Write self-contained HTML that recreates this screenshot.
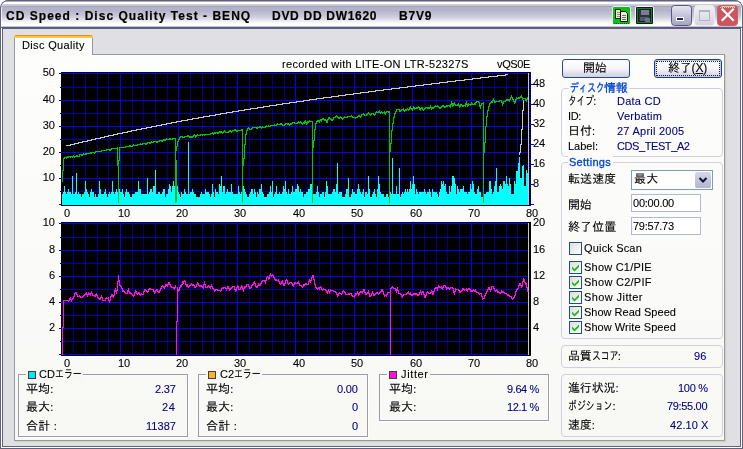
<!DOCTYPE html>
<html lang="ja"><head><meta charset="utf-8"><title>CD Speed : Disc Quality Test</title>
<style>
html,body{margin:0;padding:0;background:#fff;}
body{width:743px;height:449px;overflow:hidden;position:relative;font-family:"Liberation Sans","IPAGothic",sans-serif;font-size:12px;color:#000;}
#win{position:absolute;left:0;top:0;width:743px;height:449px;box-sizing:border-box;background:#e0dfe3;border-radius:8px 8px 0 0;overflow:hidden;}
.fr{position:absolute;box-sizing:border-box;border-style:solid;border-width:0 1px 1px 1px;pointer-events:none;}
#title{position:absolute;left:0;top:0;width:743px;height:29px;border-radius:8px 8px 0 0;
background:linear-gradient(180deg,#5e5e78 0,#5e5e78 1px,#a8a8c0 1px,#a8a8c0 2px,#ffffff 2px,#ffffff 4px,#cfcfe0 4px,#c4c4d8 6px,#a4a4b6 6px,#a4a4b6 7px,#b3b3c7 7px,#b4b4c8 11px,#bcbcce 12px,#c4c4d6 15px,#d4d4e2 18px,#ececf0 21px,#fdfdfb 23px,#fefefe 26px,#c0c0d6 26px,#c0c0d6 27px,#5e5e7c 27px,#5e5e7c 29px);}
#title:after{content:"";position:absolute;left:0;top:0;width:743px;height:29px;box-sizing:border-box;border:1px solid #62627e;border-bottom:none;border-radius:8px 8px 0 0;}
#title:before{content:"";position:absolute;left:1px;top:1px;width:741px;height:26px;box-sizing:border-box;border:1px solid rgba(255,255,255,0.75);border-bottom:none;border-top:none;border-radius:7px 7px 0 0;}
.tt{font-weight:bold;font-size:12px;}
.tt .l{font-size:12px;}
.abs{will-change:transform;position:absolute;white-space:nowrap;height:14px;line-height:14px;-webkit-text-stroke:0.1px currentColor;}
.tt{-webkit-text-stroke:0.2px #000;}
.l{font-size:11px;}
.k{display:inline-block;transform:scaleX(0.74);transform-origin:0 50%;}
.gbt{color:#0046d5;-webkit-text-stroke:0.3px #0046d5;}
.nv{color:#000080;}
.r{text-align:right;}
#page{position:absolute;left:14px;top:54px;width:711px;height:387px;box-sizing:border-box;border:1px solid #919b9c;background:linear-gradient(180deg,#fdfdfc,#f8f8f5);box-shadow:1px 1px 0 #d4d2c4, 2px 2px 0 #dcdbd4;}
#tab{position:absolute;left:14px;top:35px;width:79px;height:20px;box-sizing:border-box;border:1px solid #919b9c;border-bottom:none;border-top:none;background:#fcfcfb;border-radius:3px 3px 0 0;}
#tab:before{content:"";position:absolute;left:-1px;top:0;width:79px;height:3px;background:linear-gradient(180deg,#e68b2c 0 1px,#ffc73c 1px 3px);border-radius:3px 3px 0 0;}
.gb{position:absolute;box-sizing:border-box;border:1px solid #d0d0de;border-radius:4px;}
.gbl{position:absolute;height:12px;background:#f9f9f6;}
.gs{position:absolute;box-sizing:border-box;border:1px solid #9c9caa;box-shadow:1px 1px 0 #fff;}
.gsl{position:absolute;height:14px;background:#f7f7f4;}
.sq{position:absolute;width:8px;height:8px;box-sizing:border-box;border:1px solid #404040;}
.btn{position:absolute;box-sizing:border-box;height:19px;border:1px solid #26489c;border-radius:3px;background:linear-gradient(180deg,#ffffff 0,#f6f6fa 50%,#cfcfe0 100%);text-align:center;line-height:18px;}
.edit{position:absolute;box-sizing:border-box;border:1px solid #b4b8cc;background:#fff;}
.cb{position:absolute;width:13px;height:13px;box-sizing:border-box;border:1px solid #1c5180;background:linear-gradient(135deg,#dcdcd7,#ffffff);}
.cb svg{position:absolute;left:0;top:0;}
</style></head><body>
<div id="win">
<div id="title"></div>
<div style="position:absolute;left:671px;top:5px;width:21px;height:21px;box-sizing:border-box;border:1px solid #5a5a80;border-radius:3.5px;background:linear-gradient(180deg,#e4e4f0,#c4c4d8 50%,#a4a4c0)"></div><div style="position:absolute;left:694px;top:5px;width:21px;height:21px;box-sizing:border-box;border:1px solid #ececf2;border-radius:3.5px;background:linear-gradient(180deg,#f0f0f4,#d4d4e0)"></div>
<svg width="140" height="29" viewBox="603 0 140 29" style="position:absolute;left:603px;top:0">
<!-- copy icon -->
<rect x="612" y="6" width="19" height="19" rx="2.5" fill="#f4f4f8"/>
<rect x="613" y="7" width="17" height="17" rx="1" fill="#08c408"/>
<rect x="615.5" y="9.5" width="5" height="9" fill="#ece8d0" stroke="#202020" stroke-width="1"/>
<path d="M616.5 12H620M616.5 14H620M616.5 16H620" stroke="#8c8c8c" stroke-width="1" shape-rendering="crispEdges"/>
<path d="M620.5 11.5H625.5L627.5 13.5V21.5H620.5Z" fill="#f0ecd8" stroke="#101010" stroke-width="1"/>
<path d="M622 15H626M622 17H626M622 19H626" stroke="#707070" stroke-width="1" shape-rendering="crispEdges"/>
<path d="M614 23.5H629" stroke="#083c78" stroke-width="1" stroke-dasharray="1 1" shape-rendering="crispEdges"/>
<!-- save icon -->
<rect x="635" y="6" width="19" height="19" rx="2.5" fill="#f4f4f8"/>
<rect x="636" y="7" width="17" height="17" rx="1" fill="#101820"/>
<rect x="637.5" y="8.5" width="14" height="14" fill="#284848" stroke="#18d018" stroke-width="1" stroke-dasharray="1 1"/>
<rect x="638.5" y="9.5" width="12" height="12" fill="#2c3440" stroke="#181c28" stroke-width="1"/>
<rect x="641" y="10" width="8" height="5" fill="#7c7c94"/>
<rect x="640" y="17" width="8" height="4" fill="#50586c"/>
<rect x="645" y="18" width="5" height="4" fill="#6c7488"/>
<!-- minimize -->

<rect x="676" y="17" width="8" height="4" fill="#fff"/>
<rect x="677" y="18" width="6" height="2" fill="#1c2464"/>
<!-- maximize (disabled) -->

<rect x="699.5" y="11.5" width="10" height="9" fill="none" stroke="#b4b4c0" stroke-width="1"/>
<rect x="699" y="10" width="11" height="2" fill="#b4b4c0"/>
<!-- close -->
<rect x="717.5" y="5.5" width="20" height="20" rx="3" fill="#cc5660" stroke="#c8606c" stroke-width="1"/>
<path d="M722.5 9.5L733 20M733 9.5L722.5 20" stroke="#fff" stroke-width="2.1" stroke-linecap="square"/>
<path d="M720 7.5H736" stroke="#f4d47c" stroke-width="1" stroke-dasharray="1 1" shape-rendering="crispEdges"/>
<rect x="721" y="6" width="14" height="1" fill="#d0c8b0"/>
</svg>
<div id="page"></div>
<div id="tab"></div>
<svg id="charts" width="743" height="449" viewBox="0 0 743 449" style="position:absolute;left:0;top:0" shape-rendering="crispEdges">
<rect x="61" y="72" width="470" height="134" fill="#000"/>
<rect x="73" y="73" width="1" height="132" fill="#00008c"/>
<rect x="85" y="73" width="1" height="132" fill="#00008c"/>
<rect x="97" y="73" width="1" height="132" fill="#00008c"/>
<rect x="108" y="73" width="1" height="132" fill="#00008c"/>
<rect x="120" y="73" width="1" height="132" fill="#0000ff"/>
<rect x="132" y="73" width="1" height="132" fill="#00008c"/>
<rect x="143" y="73" width="1" height="132" fill="#00008c"/>
<rect x="155" y="73" width="1" height="132" fill="#00008c"/>
<rect x="167" y="73" width="1" height="132" fill="#00008c"/>
<rect x="178" y="73" width="1" height="132" fill="#0000ff"/>
<rect x="190" y="73" width="1" height="132" fill="#00008c"/>
<rect x="202" y="73" width="1" height="132" fill="#00008c"/>
<rect x="213" y="73" width="1" height="132" fill="#00008c"/>
<rect x="225" y="73" width="1" height="132" fill="#00008c"/>
<rect x="237" y="73" width="1" height="132" fill="#0000ff"/>
<rect x="249" y="73" width="1" height="132" fill="#00008c"/>
<rect x="260" y="73" width="1" height="132" fill="#00008c"/>
<rect x="272" y="73" width="1" height="132" fill="#00008c"/>
<rect x="284" y="73" width="1" height="132" fill="#00008c"/>
<rect x="295" y="73" width="1" height="132" fill="#0000ff"/>
<rect x="307" y="73" width="1" height="132" fill="#00008c"/>
<rect x="319" y="73" width="1" height="132" fill="#00008c"/>
<rect x="330" y="73" width="1" height="132" fill="#00008c"/>
<rect x="342" y="73" width="1" height="132" fill="#00008c"/>
<rect x="354" y="73" width="1" height="132" fill="#0000ff"/>
<rect x="365" y="73" width="1" height="132" fill="#00008c"/>
<rect x="377" y="73" width="1" height="132" fill="#00008c"/>
<rect x="389" y="73" width="1" height="132" fill="#00008c"/>
<rect x="401" y="73" width="1" height="132" fill="#00008c"/>
<rect x="412" y="73" width="1" height="132" fill="#0000ff"/>
<rect x="424" y="73" width="1" height="132" fill="#00008c"/>
<rect x="436" y="73" width="1" height="132" fill="#00008c"/>
<rect x="447" y="73" width="1" height="132" fill="#00008c"/>
<rect x="459" y="73" width="1" height="132" fill="#00008c"/>
<rect x="471" y="73" width="1" height="132" fill="#0000ff"/>
<rect x="482" y="73" width="1" height="132" fill="#00008c"/>
<rect x="494" y="73" width="1" height="132" fill="#00008c"/>
<rect x="506" y="73" width="1" height="132" fill="#00008c"/>
<rect x="517" y="73" width="1" height="132" fill="#00008c"/>
<rect x="59" y="73" width="470" height="1" fill="#0000ff"/>
<rect x="60" y="87" width="469" height="1" fill="#0000b0"/>
<rect x="59" y="100" width="470" height="1" fill="#0000ff"/>
<rect x="60" y="113" width="469" height="1" fill="#0000b0"/>
<rect x="59" y="126" width="470" height="1" fill="#0000ff"/>
<rect x="60" y="139" width="469" height="1" fill="#0000b0"/>
<rect x="59" y="152" width="470" height="1" fill="#0000ff"/>
<rect x="60" y="165" width="469" height="1" fill="#0000b0"/>
<rect x="59" y="178" width="470" height="1" fill="#0000ff"/>
<rect x="60" y="191" width="469" height="1" fill="#0000b0"/>
<rect x="59" y="204" width="470" height="1" fill="#0000ff"/>
<path d="M62 194v11M63 192v13M64 186v19M65 192v13M66 194v11M67 192v13M68 189v16M69 192v13M70 192v13M71 194v11M72 176v29M73 194v11M74 194v11M75 192v13M76 173v32M77 194v11M78 192v13M79 194v11M80 194v11M81 197v8M82 194v11M83 194v11M84 192v13M85 181v24M86 189v16M87 192v13M88 194v11M89 197v8M90 192v13M91 189v16M92 192v13M93 192v13M94 197v8M95 194v11M96 197v8M97 197v8M98 194v11M99 181v24M100 189v16M101 194v11M102 194v11M103 194v11M104 192v13M105 189v16M106 194v11M107 197v8M108 194v11M109 192v13M110 194v11M111 192v13M112 181v24M113 192v13M114 194v11M115 192v13M116 189v16M117 192v13M118 184v21M119 189v16M120 192v13M121 192v13M122 189v16M123 194v11M124 197v8M125 192v13M126 189v16M127 192v13M128 192v13M129 194v11M130 197v8M131 197v8M132 194v11M133 194v11M134 194v11M135 192v13M136 192v13M137 192v13M138 181v24M139 189v16M140 189v16M141 194v11M142 194v11M143 194v11M144 194v11M145 194v11M146 194v11M147 178v27M148 194v11M149 192v13M150 189v16M151 189v16M152 192v13M153 186v19M154 186v19M155 170v35M156 194v11M157 194v11M158 192v13M159 192v13M160 194v11M161 194v11M162 192v13M163 189v16M164 189v16M165 197v8M166 194v11M167 194v11M168 189v16M169 184v21M170 186v19M171 192v13M172 186v19M173 181v24M174 186v19M175 194v11M176 194v11M177 186v19M178 192v13M179 194v11M180 197v8M181 192v13M182 194v11M183 194v11M184 189v16M185 192v13M186 194v11M187 194v11M188 142v63M189 194v11M190 192v13M191 192v13M192 189v16M193 192v13M194 194v11M195 194v11M196 197v8M197 197v8M198 197v8M199 197v8M200 194v11M201 192v13M202 194v11M203 194v11M204 194v11M205 189v16M206 192v13M207 192v13M208 192v13M209 194v11M210 197v8M211 194v11M212 184v21M213 192v13M214 197v8M215 189v16M216 192v13M217 192v13M218 194v11M219 184v21M220 186v19M221 176v29M222 192v13M223 186v19M224 186v19M225 194v11M226 192v13M227 189v16M228 192v13M229 192v13M230 192v13M231 184v21M232 192v13M233 194v11M234 194v11M235 194v11M236 194v11M237 194v11M238 186v19M239 192v13M240 194v11M241 192v13M242 194v11M243 186v19M244 189v16M245 192v13M246 194v11M247 197v8M248 197v8M249 194v11M250 192v13M251 189v16M252 189v16M253 194v11M254 189v16M255 192v13M256 197v8M257 192v13M258 194v11M259 189v16M260 189v16M261 184v21M262 192v13M263 194v11M264 197v8M265 197v8M266 197v8M267 194v11M268 194v11M269 192v13M270 186v19M271 192v13M272 181v24M273 197v8M274 194v11M275 192v13M276 186v19M277 194v11M278 194v11M279 192v13M280 194v11M281 194v11M282 192v13M283 186v19M284 189v16M285 181v24M286 192v13M287 194v11M288 189v16M289 194v11M290 194v11M291 192v13M292 186v19M293 192v13M294 192v13M295 189v16M296 189v16M297 184v21M298 186v19M299 192v13M300 189v16M301 192v13M302 192v13M303 197v8M304 194v11M305 194v11M306 192v13M307 192v13M308 189v16M309 189v16M310 184v21M311 184v21M312 166v39M313 194v11M314 194v11M315 194v11M316 192v13M317 186v19M318 192v13M319 197v8M320 194v11M321 194v11M322 192v13M323 192v13M324 197v8M325 192v13M326 181v24M327 186v19M328 194v11M329 194v11M330 194v11M331 194v11M332 192v13M333 189v16M334 189v16M335 192v13M336 184v21M337 163v42M338 194v11M339 192v13M340 192v13M341 192v13M342 197v8M343 197v8M344 197v8M345 194v11M346 189v16M347 189v16M348 178v27M349 197v8M350 197v8M351 194v11M352 189v16M353 192v13M354 192v13M355 194v11M356 194v11M357 189v16M358 184v21M359 189v16M360 192v13M361 194v11M362 192v13M363 189v16M364 197v8M365 192v13M366 192v13M367 194v11M368 176v29M369 189v16M370 197v8M371 197v8M372 194v11M373 192v13M374 189v16M375 194v11M376 197v8M377 189v16M378 176v29M379 184v21M380 192v13M381 194v11M382 194v11M383 194v11M384 197v8M385 197v8M386 194v11M387 194v11M388 197v8M389 194v11M390 192v13M391 194v11M392 158v47M393 194v11M394 194v11M395 194v11M396 186v19M397 194v11M398 194v11M399 168v37M400 197v8M401 194v11M402 192v13M403 194v11M404 192v13M405 189v16M406 192v13M407 189v16M408 192v13M409 189v16M410 181v24M411 189v16M412 184v21M413 176v29M414 184v21M415 194v11M416 189v16M417 192v13M418 194v11M419 192v13M420 192v13M421 192v13M422 192v13M423 192v13M424 189v16M425 192v13M426 194v11M427 192v13M428 192v13M429 189v16M430 192v13M431 197v8M432 189v16M433 192v13M434 192v13M435 192v13M436 192v13M437 194v11M438 197v8M439 192v13M440 189v16M441 181v24M442 184v21M443 181v24M444 186v19M445 184v21M446 192v13M447 194v11M448 194v11M449 186v19M450 192v13M451 186v19M452 176v29M453 176v29M454 178v27M455 184v21M456 194v11M457 186v19M458 189v16M459 192v13M460 189v16M461 189v16M462 189v16M463 186v19M464 192v13M465 192v13M466 192v13M467 194v11M468 192v13M469 192v13M470 184v21M471 189v16M472 181v24M473 184v21M474 192v13M475 194v11M476 194v11M477 189v16M478 186v19M479 192v13M480 192v13M481 197v8M482 197v8M483 197v8M484 194v11M485 194v11M486 192v13M487 192v13M488 192v13M489 181v24M490 181v24M491 189v16M492 194v11M493 192v13M494 186v19M495 181v24M496 168v37M497 192v13M498 192v13M499 186v19M500 184v21M501 186v19M502 189v16M503 181v24M504 181v24M505 184v21M506 176v29M507 184v21M508 186v19M509 178v27M510 184v21M511 194v11M512 194v11M513 194v11M514 181v24M515 184v21M516 171v34M517 171v34M518 163v42M519 157v48M520 178v27M521 178v27M522 166v39M523 165v40M524 186v19M525 186v19M526 170v35M527 173v32M528 171v34" stroke="#00ffff" stroke-width="1" fill="none" transform="translate(0.5,0)"/>
<path d="M66 145v1M67 145v1M68 145v1M69 145v1M70 144v2M71 144v1M72 144v1M73 144v1M74 143v2M75 143v1M76 143v1M77 143v1M78 142v2M79 142v1M80 142v1M81 142v1M82 141v2M83 141v1M84 141v1M85 141v1M86 141v1M87 140v2M88 140v1M89 140v1M90 140v1M91 139v2M92 139v1M93 139v1M94 139v1M95 138v2M96 138v1M97 138v1M98 138v1M99 138v1M100 137v2M101 137v1M102 137v1M103 137v1M104 136v2M105 136v1M106 136v1M107 136v1M108 135v2M109 135v1M110 135v1M111 135v1M112 135v1M113 134v2M114 134v1M115 134v1M116 134v1M117 133v2M118 133v1M119 133v1M120 133v1M121 133v1M122 132v2M123 132v1M124 132v1M125 132v1M126 132v1M127 131v2M128 131v1M129 131v1M130 131v1M131 130v2M132 130v1M133 130v1M134 130v1M135 130v1M136 129v2M137 129v1M138 129v1M139 129v1M140 129v1M141 128v2M142 128v1M143 128v1M144 128v1M145 128v1M146 127v2M147 127v1M148 127v1M149 127v1M150 127v1M151 126v2M152 126v1M153 126v1M154 126v1M155 126v1M156 125v2M157 125v1M158 125v1M159 125v1M160 125v1M161 124v2M162 124v1M163 124v1M164 124v1M165 124v1M166 123v2M167 123v1M168 123v1M169 123v1M170 123v1M171 122v2M172 122v1M173 122v1M174 122v1M175 122v1M176 121v2M177 121v1M178 121v1M179 121v1M180 121v1M181 120v2M182 120v1M183 120v1M184 120v1M185 120v1M186 120v1M187 119v2M188 119v1M189 119v1M190 119v1M191 119v1M192 118v2M193 118v1M194 118v1M195 118v1M196 118v1M197 118v1M198 117v2M199 117v1M200 117v1M201 117v1M202 117v1M203 116v2M204 116v1M205 116v1M206 116v1M207 116v1M208 116v1M209 115v2M210 115v1M211 115v1M212 115v1M213 115v1M214 115v1M215 114v2M216 114v1M217 114v1M218 114v1M219 114v1M220 113v2M221 113v1M222 113v1M223 113v1M224 113v1M225 113v1M226 112v2M227 112v1M228 112v1M229 112v1M230 112v1M231 112v1M232 111v2M233 111v1M234 111v1M235 111v1M236 111v1M237 111v1M238 110v2M239 110v1M240 110v1M241 110v1M242 110v1M243 110v1M244 109v2M245 109v1M246 109v1M247 109v1M248 109v1M249 109v1M250 108v2M251 108v1M252 108v1M253 108v1M254 108v1M255 108v1M256 108v1M257 107v2M258 107v1M259 107v1M260 107v1M261 107v1M262 107v1M263 106v2M264 106v1M265 106v1M266 106v1M267 106v1M268 106v1M269 105v2M270 105v1M271 105v1M272 105v1M273 105v1M274 105v1M275 105v1M276 104v2M277 104v1M278 104v1M279 104v1M280 104v1M281 104v1M282 103v2M283 103v1M284 103v1M285 103v1M286 103v1M287 103v1M288 103v1M289 102v2M290 102v1M291 102v1M292 102v1M293 102v1M294 102v1M295 102v1M296 101v2M297 101v1M298 101v1M299 101v1M300 101v1M301 101v1M302 101v1M303 100v2M304 100v1M305 100v1M306 100v1M307 100v1M308 100v1M309 99v2M310 99v1M311 99v1M312 99v1M313 99v1M314 99v1M315 99v1M316 98v2M317 98v1M318 98v1M319 98v1M320 98v1M321 98v1M322 98v1M323 97v2M324 97v1M325 97v1M326 97v1M327 97v1M328 97v1M329 97v1M330 97v1M331 96v2M332 96v1M333 96v1M334 96v1M335 96v1M336 96v1M337 96v1M338 95v2M339 95v1M340 95v1M341 95v1M342 95v1M343 95v1M344 95v1M345 94v2M346 94v1M347 94v1M348 94v1M349 94v1M350 94v1M351 94v1M352 94v1M353 93v2M354 93v1M355 93v1M356 93v1M357 93v1M358 93v1M359 93v1M360 92v2M361 92v1M362 92v1M363 92v1M364 92v1M365 92v1M366 92v1M367 92v1M368 91v2M369 91v1M370 91v1M371 91v1M372 91v1M373 91v1M374 91v1M375 90v2M376 90v1M377 90v1M378 90v1M379 90v1M380 90v1M381 90v1M382 90v1M383 89v2M384 89v1M385 89v1M386 89v1M387 89v1M388 89v1M389 89v1M390 89v1M391 88v2M392 88v1M393 88v1M394 88v1M395 88v1M396 88v1M397 88v1M398 88v1M399 87v2M400 87v1M401 87v1M402 87v1M403 87v1M404 87v1M405 87v1M406 87v1M407 86v2M408 86v1M409 86v1M410 86v1M411 86v1M412 86v1M413 86v1M414 86v1M415 85v2M416 85v1M417 85v1M418 85v1M419 85v1M420 85v1M421 85v1M422 85v1M423 84v2M424 84v1M425 84v1M426 84v1M427 84v1M428 84v1M429 84v1M430 84v1M431 83v2M432 83v1M433 83v1M434 83v1M435 83v1M436 83v1M437 83v1M438 83v1M439 82v2M440 82v1M441 82v1M442 82v1M443 82v1M444 82v1M445 82v1M446 82v1M447 81v2M448 81v1M449 81v1M450 81v1M451 81v1M452 81v1M453 81v1M454 81v1M455 80v2M456 80v1M457 80v1M458 80v1M459 80v1M460 80v1M461 80v1M462 80v1M463 80v1M464 79v2M465 79v1M466 79v1M467 79v1M468 79v1M469 79v1M470 79v1M471 79v1M472 78v2M473 78v1M474 78v1M475 78v1M476 78v1M477 78v1M478 78v1M479 78v1M480 77v2M481 77v1M482 77v1M483 77v1M484 77v1M485 77v1M486 77v1M487 77v1M488 76v2M489 76v1M490 76v1M491 76v1M492 76v1M493 76v1M494 76v1M495 76v1M496 76v1M497 75v2M498 75v1M499 75v1M500 75v1M501 75v1M502 75v1M503 75v1M504 75v1M505 74v2M506 74v1M507 74v1" stroke="#c8c8c8" stroke-width="1" fill="none" transform="translate(0.5,0)"/><path d="M519 152v3M520 144v9M521 129v16M522 110v20M523 100v11" stroke="#c8c8c8" stroke-width="1" fill="none" transform="translate(0.5,0)"/>
<path d="M62 170v12M63 158v13M64 157v2M65 157v1M66 157v2M67 156v2M68 156v2M69 156v1M70 156v2M71 156v1M72 156v2M73 155v2M74 156v2M75 156v1M76 155v2M77 155v2M78 156v1M79 154v3M80 154v1M81 154v2M82 154v2M83 153v2M84 154v1M85 153v2M86 153v2M87 153v1M88 153v1M89 153v1M90 152v2M91 152v2M92 152v1M93 152v1M94 152v2M95 151v2M96 151v1M97 151v1M98 151v1M99 151v1M100 151v1M101 150v2M102 150v1M103 150v1M104 150v1M105 150v1M106 149v2M107 149v1M108 149v1M109 149v2M110 149v2M111 148v2M112 148v1M113 148v1M114 148v1M115 148v1M116 148v1M117 148v1M118 202v1M119 147v1M120 147v1M121 147v1M122 147v1M123 147v1M124 147v1M125 146v2M126 146v1M127 146v1M128 146v1M129 145v2M130 145v2M131 146v1M132 145v2M133 144v2M134 145v1M135 145v1M136 145v1M137 144v2M138 144v1M139 144v1M140 143v2M141 144v1M142 143v2M143 143v1M144 143v1M145 143v2M146 143v2M147 142v2M148 142v1M149 142v2M150 142v2M151 141v2M152 142v1M153 141v2M154 141v1M155 141v1M156 141v2M157 141v2M158 141v1M159 140v2M160 140v1M161 140v2M162 140v2M163 139v2M164 139v2M165 139v2M166 138v2M167 139v1M168 139v1M169 138v2M170 138v2M171 139v1M172 138v2M173 138v1M174 138v1M175 202v1M176 146v5M177 141v6M178 139v3M179 137v3M180 136v2M181 136v1M182 136v2M183 137v1M184 136v2M185 136v1M186 136v1M187 135v2M188 135v2M189 136v2M190 136v2M191 136v2M192 136v2M193 135v2M194 134v2M195 135v3M196 135v2M197 134v2M198 135v1M199 135v1M200 134v2M201 134v1M202 134v2M203 134v1M204 134v2M205 134v1M206 134v1M207 134v1M208 134v1M209 134v1M210 133v2M211 133v1M212 132v2M213 133v2M214 132v2M215 132v2M216 132v1M217 132v2M218 132v2M219 131v2M220 131v2M221 131v2M222 132v2M223 131v2M224 130v2M225 131v2M226 132v1M227 132v1M228 131v2M229 130v2M230 130v2M231 131v2M232 130v2M233 130v1M234 129v2M235 129v2M236 130v2M237 130v2M238 130v1M239 130v1M240 130v1M241 129v2M242 202v1M243 158v8M244 144v15M245 134v11M246 130v5M247 128v3M248 127v2M249 128v2M250 129v1M251 128v2M252 127v2M253 127v1M254 127v1M255 127v1M256 127v2M257 127v2M258 127v1M259 126v2M260 126v2M261 127v2M262 126v2M263 127v1M264 127v1M265 126v2M266 125v2M267 126v1M268 125v2M269 126v1M270 125v2M271 125v1M272 125v1M273 125v1M274 124v2M275 125v1M276 124v2M277 123v2M278 124v1M279 124v1M280 123v2M281 123v2M282 124v2M283 125v1M284 124v2M285 123v2M286 123v1M287 123v2M288 123v2M289 124v2M290 123v2M291 123v2M292 122v2M293 122v1M294 122v2M295 123v1M296 123v1M297 122v2M298 121v2M299 122v2M300 121v2M301 122v2M302 123v2M303 122v2M304 121v3M305 120v3M306 122v3M307 121v3M308 121v2M309 120v2M310 121v1M311 121v1M312 202v1M313 140v8M314 129v12M315 123v7M316 121v3M317 120v2M318 120v2M319 120v3M320 119v2M321 119v3M322 118v2M323 118v2M324 119v2M325 119v2M326 120v3M327 119v4M328 117v3M329 117v2M330 118v2M331 119v2M332 119v2M333 117v3M334 117v1M335 116v2M336 115v2M337 116v2M338 117v2M339 117v2M340 116v2M341 117v2M342 118v2M343 117v2M344 116v2M345 117v1M346 117v1M347 116v2M348 116v1M349 116v1M350 116v1M351 115v2M352 116v2M353 117v1M354 117v1M355 117v2M356 117v1M357 116v2M358 115v2M359 115v2M360 116v2M361 114v3M362 114v1M363 113v2M364 114v2M365 115v1M366 114v2M367 113v2M368 112v2M369 113v2M370 114v2M371 113v2M372 113v1M373 113v2M374 114v2M375 112v3M376 111v2M377 112v1M378 111v2M379 110v3M380 112v2M381 111v2M382 112v2M383 112v1M384 111v3M385 112v3M386 111v2M387 111v1M388 111v2M389 202v1M390 143v9M391 130v14M392 123v8M393 117v7M394 113v5M395 111v3M396 109v3M397 109v1M398 109v1M399 109v3M400 110v2M401 109v2M402 109v1M403 108v3M404 110v2M405 109v2M406 109v2M407 108v2M408 109v2M409 107v3M410 106v3M411 108v2M412 108v3M413 106v3M414 107v3M415 108v1M416 107v2M417 107v2M418 106v2M419 107v3M420 108v3M421 107v2M422 107v3M423 109v2M424 108v2M425 107v2M426 107v1M427 107v2M428 107v2M429 107v2M430 105v3M431 107v3M432 107v2M433 107v2M434 106v2M435 105v2M436 106v1M437 105v2M438 106v2M439 107v2M440 107v2M441 106v2M442 105v2M443 105v2M444 106v2M445 106v2M446 105v2M447 105v2M448 105v1M449 105v2M450 104v4M451 101v4M452 103v4M453 103v3M454 102v3M455 104v2M456 105v1M457 104v2M458 103v3M459 105v3M460 104v3M461 104v2M462 105v2M463 105v2M464 105v1M465 103v4M466 101v4M467 104v3M468 103v3M469 104v1M470 104v2M471 102v3M472 103v2M473 104v1M474 103v2M475 102v3M476 101v2M477 101v1M478 101v2M479 102v5M480 105v4M481 103v3M482 103v1M483 202v1M484 142v11M485 126v17M486 116v11M487 110v7M488 106v5M489 103v4M490 102v2M491 101v2M492 100v3M493 98v3M494 100v3M495 101v2M496 101v1M497 101v1M498 101v1M499 100v2M500 100v1M501 100v3M502 102v4M503 101v3M504 101v1M505 100v2M506 99v2M507 99v2M508 99v2M509 99v3M510 97v3M511 95v3M512 97v3M513 99v3M514 101v3M515 99v4M516 97v3M517 98v1M518 97v2M519 97v2M520 96v2M521 95v3M522 97v3M523 98v1M524 98v1M525 98v3M526 99v3M527 97v3M528 97v1M117 147V166M118 160V203M119 147V161M175 138V203M176 160V202M242 129V203M312 121V203M389 111V203M483 102V203" stroke="#04c404" stroke-width="1" fill="none" transform="translate(0.5,0)"/>
<rect x="528" y="73" width="1" height="132" fill="#c8c8c8"/>
<rect x="529" y="204" width="5" height="1" fill="#0000ff"/>
<rect x="529" y="202" width="2" height="1" fill="#0000d0"/>
<rect x="529" y="199" width="2" height="1" fill="#0000d0"/>
<rect x="529" y="197" width="2" height="1" fill="#0000d0"/>
<rect x="529" y="194" width="2" height="1" fill="#0000d0"/>
<rect x="529" y="192" width="2" height="1" fill="#0000d0"/>
<rect x="529" y="189" width="2" height="1" fill="#0000d0"/>
<rect x="529" y="187" width="2" height="1" fill="#0000d0"/>
<rect x="529" y="184" width="5" height="1" fill="#0000ff"/>
<rect x="529" y="182" width="2" height="1" fill="#0000d0"/>
<rect x="529" y="179" width="2" height="1" fill="#0000d0"/>
<rect x="529" y="177" width="2" height="1" fill="#0000d0"/>
<rect x="529" y="174" width="2" height="1" fill="#0000d0"/>
<rect x="529" y="172" width="2" height="1" fill="#0000d0"/>
<rect x="529" y="169" width="2" height="1" fill="#0000d0"/>
<rect x="529" y="167" width="2" height="1" fill="#0000d0"/>
<rect x="529" y="164" width="5" height="1" fill="#0000ff"/>
<rect x="529" y="162" width="2" height="1" fill="#0000d0"/>
<rect x="529" y="159" width="2" height="1" fill="#0000d0"/>
<rect x="529" y="157" width="2" height="1" fill="#0000d0"/>
<rect x="529" y="154" width="2" height="1" fill="#0000d0"/>
<rect x="529" y="152" width="2" height="1" fill="#0000d0"/>
<rect x="529" y="149" width="2" height="1" fill="#0000d0"/>
<rect x="529" y="147" width="2" height="1" fill="#0000d0"/>
<rect x="529" y="144" width="5" height="1" fill="#0000ff"/>
<rect x="529" y="142" width="2" height="1" fill="#0000d0"/>
<rect x="529" y="139" width="2" height="1" fill="#0000d0"/>
<rect x="529" y="137" width="2" height="1" fill="#0000d0"/>
<rect x="529" y="134" width="2" height="1" fill="#0000d0"/>
<rect x="529" y="132" width="2" height="1" fill="#0000d0"/>
<rect x="529" y="129" width="2" height="1" fill="#0000d0"/>
<rect x="529" y="127" width="2" height="1" fill="#0000d0"/>
<rect x="529" y="124" width="5" height="1" fill="#0000ff"/>
<rect x="529" y="122" width="2" height="1" fill="#0000d0"/>
<rect x="529" y="119" width="2" height="1" fill="#0000d0"/>
<rect x="529" y="117" width="2" height="1" fill="#0000d0"/>
<rect x="529" y="114" width="2" height="1" fill="#0000d0"/>
<rect x="529" y="112" width="2" height="1" fill="#0000d0"/>
<rect x="529" y="109" width="2" height="1" fill="#0000d0"/>
<rect x="529" y="107" width="2" height="1" fill="#0000d0"/>
<rect x="529" y="104" width="5" height="1" fill="#0000ff"/>
<rect x="529" y="102" width="2" height="1" fill="#0000d0"/>
<rect x="529" y="99" width="2" height="1" fill="#0000d0"/>
<rect x="529" y="97" width="2" height="1" fill="#0000d0"/>
<rect x="529" y="94" width="2" height="1" fill="#0000d0"/>
<rect x="529" y="92" width="2" height="1" fill="#0000d0"/>
<rect x="529" y="89" width="2" height="1" fill="#0000d0"/>
<rect x="529" y="87" width="2" height="1" fill="#0000d0"/>
<rect x="529" y="84" width="5" height="1" fill="#0000ff"/>
<rect x="529" y="82" width="2" height="1" fill="#0000d0"/>
<rect x="529" y="79" width="2" height="1" fill="#0000d0"/>
<rect x="529" y="77" width="2" height="1" fill="#0000d0"/>
<rect x="529" y="74" width="2" height="1" fill="#0000d0"/>
<rect x="61" y="222" width="470" height="134" fill="#000"/>
<rect x="73" y="223" width="1" height="132" fill="#00008c"/>
<rect x="85" y="223" width="1" height="132" fill="#00008c"/>
<rect x="97" y="223" width="1" height="132" fill="#00008c"/>
<rect x="108" y="223" width="1" height="132" fill="#00008c"/>
<rect x="120" y="223" width="1" height="132" fill="#0000ff"/>
<rect x="132" y="223" width="1" height="132" fill="#00008c"/>
<rect x="143" y="223" width="1" height="132" fill="#00008c"/>
<rect x="155" y="223" width="1" height="132" fill="#00008c"/>
<rect x="167" y="223" width="1" height="132" fill="#00008c"/>
<rect x="178" y="223" width="1" height="132" fill="#0000ff"/>
<rect x="190" y="223" width="1" height="132" fill="#00008c"/>
<rect x="202" y="223" width="1" height="132" fill="#00008c"/>
<rect x="213" y="223" width="1" height="132" fill="#00008c"/>
<rect x="225" y="223" width="1" height="132" fill="#00008c"/>
<rect x="237" y="223" width="1" height="132" fill="#0000ff"/>
<rect x="249" y="223" width="1" height="132" fill="#00008c"/>
<rect x="260" y="223" width="1" height="132" fill="#00008c"/>
<rect x="272" y="223" width="1" height="132" fill="#00008c"/>
<rect x="284" y="223" width="1" height="132" fill="#00008c"/>
<rect x="295" y="223" width="1" height="132" fill="#0000ff"/>
<rect x="307" y="223" width="1" height="132" fill="#00008c"/>
<rect x="319" y="223" width="1" height="132" fill="#00008c"/>
<rect x="330" y="223" width="1" height="132" fill="#00008c"/>
<rect x="342" y="223" width="1" height="132" fill="#00008c"/>
<rect x="354" y="223" width="1" height="132" fill="#0000ff"/>
<rect x="365" y="223" width="1" height="132" fill="#00008c"/>
<rect x="377" y="223" width="1" height="132" fill="#00008c"/>
<rect x="389" y="223" width="1" height="132" fill="#00008c"/>
<rect x="401" y="223" width="1" height="132" fill="#00008c"/>
<rect x="412" y="223" width="1" height="132" fill="#0000ff"/>
<rect x="424" y="223" width="1" height="132" fill="#00008c"/>
<rect x="436" y="223" width="1" height="132" fill="#00008c"/>
<rect x="447" y="223" width="1" height="132" fill="#00008c"/>
<rect x="459" y="223" width="1" height="132" fill="#00008c"/>
<rect x="471" y="223" width="1" height="132" fill="#0000ff"/>
<rect x="482" y="223" width="1" height="132" fill="#00008c"/>
<rect x="494" y="223" width="1" height="132" fill="#00008c"/>
<rect x="506" y="223" width="1" height="132" fill="#00008c"/>
<rect x="517" y="223" width="1" height="132" fill="#00008c"/>
<rect x="59" y="223" width="470" height="1" fill="#0000ff"/>
<rect x="60" y="237" width="469" height="1" fill="#0000b0"/>
<rect x="59" y="250" width="470" height="1" fill="#0000ff"/>
<rect x="60" y="263" width="469" height="1" fill="#0000b0"/>
<rect x="59" y="276" width="470" height="1" fill="#0000ff"/>
<rect x="60" y="289" width="469" height="1" fill="#0000b0"/>
<rect x="59" y="302" width="470" height="1" fill="#0000ff"/>
<rect x="60" y="315" width="469" height="1" fill="#0000b0"/>
<rect x="59" y="328" width="470" height="1" fill="#0000ff"/>
<rect x="60" y="341" width="469" height="1" fill="#0000b0"/>
<rect x="59" y="354" width="470" height="1" fill="#0000ff"/>
<rect x="528" y="223" width="1" height="132" fill="#c8c8c8"/>
<path d="M62 327v28M63 300v28M64 300v1M65 300v1M66 300v1M67 300v1M68 300v2M69 298v3M70 297v3M71 299v3M72 298v2M73 296v3M74 293v4M75 292v2M76 292v3M77 294v3M78 296v1M79 295v2M80 296v2M81 297v1M82 296v2M83 295v2M84 294v2M85 293v2M86 292v3M87 294v3M88 292v3M89 293v2M90 293v3M91 291v3M92 293v3M93 295v1M94 295v2M95 294v3M96 293v3M97 295v3M98 297v2M99 298v2M100 297v3M101 295v3M102 297v4M103 300v1M104 300v1M105 298v3M106 297v2M107 298v1M108 297v4M109 300v3M110 296v5M111 294v3M112 294v3M113 295v3M114 290v6M115 288v4M116 290v4M117 281v10M118 275v7M119 280v6M120 285v2M121 286v3M122 288v4M123 290v2M124 291v2M125 292v2M126 293v1M127 290v4M128 288v4M129 291v3M130 292v2M131 293v2M132 294v2M133 295v2M134 292v4M135 290v3M136 291v3M137 293v2M138 292v2M139 292v3M140 294v2M141 293v2M142 294v1M143 291v4M144 289v3M145 289v2M146 290v2M147 291v2M148 289v3M149 288v2M150 288v2M151 289v1M152 289v1M153 289v3M154 291v3M155 290v3M156 289v2M157 289v3M158 291v2M159 290v3M160 288v3M161 286v3M162 285v2M163 286v2M164 286v3M165 284v3M166 284v2M167 284v3M168 282v3M169 282v3M170 284v3M171 286v2M172 287v1M173 287v2M174 287v3M175 285v3M176 321v34M177 287v35M178 289v3M179 287v4M180 285v3M181 284v3M182 281v4M183 281v3M184 280v2M185 281v4M186 284v3M187 284v3M188 286v2M189 285v2M190 284v2M191 283v2M192 284v2M193 284v2M194 285v3M195 286v2M196 284v3M197 282v3M198 283v3M199 285v2M200 285v2M201 285v2M202 286v2M203 284v5M204 281v4M205 284v4M206 287v1M207 286v2M208 285v2M209 286v2M210 286v3M211 284v3M212 286v3M213 288v2M214 289v3M215 289v2M216 289v1M217 289v2M218 290v1M219 290v1M220 290v2M221 288v3M222 287v2M223 287v2M224 287v1M225 287v2M226 288v3M227 286v3M228 286v3M229 288v3M230 288v2M231 287v2M232 286v2M233 286v1M234 286v4M235 289v3M236 287v4M237 285v3M238 286v4M239 289v1M240 287v3M241 285v3M242 286v4M243 288v4M244 286v3M245 286v2M246 284v3M247 284v1M248 284v3M249 286v3M250 287v2M251 285v3M252 284v2M253 282v3M254 281v3M255 283v4M256 286v2M257 285v3M258 283v3M259 284v2M260 283v3M261 281v3M262 280v2M263 280v1M264 280v2M265 280v4M266 277v4M267 276v2M268 277v3M269 275v4M270 273v3M271 275v2M272 274v2M273 275v3M274 277v3M275 279v2M276 279v2M277 280v1M278 279v3M279 281v3M280 283v2M281 281v3M282 280v4M283 283v3M284 283v3M285 280v4M286 279v2M287 280v4M288 283v2M289 282v2M290 282v1M291 282v2M292 283v3M293 284v3M294 282v3M295 282v2M296 283v1M297 282v2M298 281v3M299 283v3M300 285v1M301 285v2M302 286v2M303 284v3M304 284v2M305 283v2M306 283v2M307 284v1M308 281v4M309 279v3M310 280v3M311 277v4M312 275v3M313 275v5M314 279v6M315 284v4M316 287v2M317 288v2M318 287v2M319 287v3M320 286v2M321 287v3M322 289v2M323 288v2M324 289v1M325 289v2M326 290v3M327 291v3M328 289v3M329 291v3M330 289v3M331 290v1M332 290v1M333 290v2M334 291v1M335 291v2M336 292v3M337 294v3M338 293v3M339 292v2M340 293v1M341 293v2M342 291v3M343 290v2M344 291v2M345 292v3M346 294v1M347 294v1M348 293v2M349 293v2M350 293v1M351 293v3M352 295v2M353 296v1M354 295v3M355 293v3M356 293v2M357 291v3M358 293v3M359 292v3M360 291v2M361 291v2M362 291v3M363 289v3M364 289v4M365 292v3M366 293v2M367 292v2M368 290v4M369 293v4M370 295v2M371 293v3M372 291v3M373 293v3M374 294v2M375 293v2M376 292v2M377 292v2M378 293v2M379 292v2M380 291v2M381 289v3M382 289v3M383 291v4M384 294v3M385 295v1M386 294v3M387 292v3M388 292v1M389 292v1M390 354v1M391 287v2M392 286v2M393 287v2M394 288v1M395 288v3M396 289v4M397 287v4M398 290v4M399 293v1M400 293v2M401 294v3M402 295v3M403 294v2M404 294v1M405 294v1M406 293v2M407 292v2M408 291v3M409 293v2M410 292v3M411 294v2M412 294v2M413 293v2M414 293v2M415 293v2M416 293v2M417 294v2M418 294v2M419 292v3M420 290v3M421 292v3M422 291v2M423 291v4M424 294v4M425 295v3M426 292v4M427 291v2M428 292v2M429 293v1M430 292v2M431 290v3M432 291v4M433 291v4M434 288v4M435 287v2M436 287v2M437 287v4M438 285v3M439 286v2M440 287v1M441 286v3M442 287v3M443 285v3M444 285v1M445 285v3M446 287v3M447 287v2M448 287v2M449 288v2M450 287v2M451 287v1M452 287v2M453 288v5M454 291v4M455 288v4M456 289v1M457 289v1M458 289v2M459 290v3M460 291v2M461 290v2M462 288v3M463 288v2M464 289v2M465 289v1M466 288v3M467 289v3M468 288v2M469 288v2M470 289v3M471 290v2M472 290v2M473 289v2M474 290v2M475 289v3M476 291v2M477 292v1M478 292v2M479 293v2M480 293v1M481 293v4M482 296v4M483 298v1M484 295v4M485 293v3M486 291v3M487 289v3M488 287v3M489 287v3M490 289v3M491 286v4M492 286v1M493 286v3M494 288v3M495 290v2M496 289v2M497 290v3M498 291v2M499 292v2M500 292v2M501 290v3M502 291v2M503 291v2M504 292v2M505 293v1M506 293v2M507 294v2M508 294v2M509 295v2M510 296v1M511 296v3M512 298v2M513 297v2M514 295v3M515 291v5M516 289v3M517 288v2M518 285v4M519 283v3M520 283v3M521 285v3M522 281v6M523 278v4M524 279v4M525 282v3M526 283v5M527 287v5M528 291v1M390 288V355" stroke="#ff10e8" stroke-width="1" fill="none" transform="translate(0.5,0)"/>
</svg>
<div class="gs" style="left:18px;top:374px;width:170px;height:63px"></div>
<div class="gsl" style="left:26px;top:367px;width:57.4px"></div>
<div class="sq" style="left:28px;top:371px;background:#00e8f8"></div>
<div class="gs" style="left:198px;top:374px;width:170px;height:63px"></div>
<div class="gsl" style="left:206px;top:367px;width:56.0px"></div>
<div class="sq" style="left:208px;top:371px;background:#ffb428"></div>
<div class="gs" style="left:379px;top:374px;width:170px;height:47px"></div>
<div class="gsl" style="left:387px;top:367px;width:43.0px"></div>
<div class="sq" style="left:389px;top:371px;background:#ff10e0"></div>
<div class="btn" style="left:562px;top:59px;width:68px"></div>
<div class="btn" style="left:654px;top:59px;width:68px;border-color:#1c3c94;box-shadow:inset 0 0 0 1px #bcc8ec"><div style="position:absolute;left:1px;top:1px;right:1px;bottom:1px;border:1px dotted #222"></div></div>
<div class="gb" style="left:561px;top:88px;width:162px;height:69px"></div>
<div class="gbl" style="left:568.5px;top:82px;width:60.4px"></div>
<div class="gb" style="left:561px;top:162px;width:162px;height:177px"></div>
<div class="gbl" style="left:568px;top:156px;width:45.0px"></div>
<div class="gb" style="left:561px;top:345px;width:162px;height:23px"></div>
<div class="gb" style="left:561px;top:374px;width:162px;height:63px"></div>
<div class="edit" style="left:631px;top:170px;width:82px;height:20px;border-color:#7f9db9"><div style="position:absolute;right:1px;top:1px;width:16px;height:16px;border-radius:2px;background:linear-gradient(180deg,#d8d8e8,#b4b4cc)"><svg width="16" height="16" style="position:absolute;left:0;top:0"><path d="M4.5 6 L8 9.5 L11.5 6" stroke="#10103c" stroke-width="2" fill="none"/></svg></div></div>
<div class="edit" style="left:631px;top:194px;width:70px;height:18px"></div>
<div class="edit" style="left:631px;top:217px;width:70px;height:18px"></div>
<div class="cb" style="left:569px;top:242px"></div>
<div class="cb" style="left:569px;top:261px"><svg width="11" height="11"><path d="M2 4.5 L4.5 7 L9 2.5 V5 L4.5 9.5 L2 7 Z" fill="#1fbb1f"/></svg></div>
<div class="cb" style="left:569px;top:276px"><svg width="11" height="11"><path d="M2 4.5 L4.5 7 L9 2.5 V5 L4.5 9.5 L2 7 Z" fill="#1fbb1f"/></svg></div>
<div class="cb" style="left:569px;top:291px"><svg width="11" height="11"><path d="M2 4.5 L4.5 7 L9 2.5 V5 L4.5 9.5 L2 7 Z" fill="#1fbb1f"/></svg></div>
<div class="cb" style="left:569px;top:306px"><svg width="11" height="11"><path d="M2 4.5 L4.5 7 L9 2.5 V5 L4.5 9.5 L2 7 Z" fill="#1fbb1f"/></svg></div>
<div class="cb" style="left:569px;top:321px"><svg width="11" height="11"><path d="M2 4.5 L4.5 7 L9 2.5 V5 L4.5 9.5 L2 7 Z" fill="#1fbb1f"/></svg></div>
<div class="abs tt" style="left:5.9px;top:8.5px;"><span id="t0" style="letter-spacing:1.03px"><span class="l">CD Speed : Disc Quality Test - BENQ</span></span></div>
<div class="abs tt" style="left:272.1px;top:8.5px;"><span id="t1" style="letter-spacing:0.71px"><span class="l">DVD DD DW1620</span></span></div>
<div class="abs tt" style="left:399.0px;top:8.5px;"><span id="t2" style="letter-spacing:0.82px"><span class="l">B7V9</span></span></div>
<div class="abs " style="left:281.9px;top:57px;"><span id="t3" style="letter-spacing:0.30px"><span class="l">recorded with LITE-ON LTR-52327S</span></span></div>
<div class="abs " style="left:497.0px;top:57px;"><span id="t4" style="letter-spacing:-0.37px"><span class="l">vQS0E</span></span></div>
<div class="abs " style="left:21.6px;top:37.5px;font-size:12px"><span id="t5" style="letter-spacing:0.35px"><span class="l">Disc Quality</span></span></div>
<div class="abs r " style="left:-85.3px;width:140px;top:65px;"><span id="t6" style="letter-spacing:0.00px"><span class="l">50</span></span></div>
<div class="abs r " style="left:-85.3px;width:140px;top:92px;"><span id="t7" style="letter-spacing:0.00px"><span class="l">40</span></span></div>
<div class="abs r " style="left:-85.3px;width:140px;top:118px;"><span id="t8" style="letter-spacing:0.00px"><span class="l">30</span></span></div>
<div class="abs r " style="left:-85.3px;width:140px;top:144px;"><span id="t9" style="letter-spacing:0.00px"><span class="l">20</span></span></div>
<div class="abs r " style="left:-85.3px;width:140px;top:170px;"><span id="t10" style="letter-spacing:0.00px"><span class="l">10</span></span></div>
<div class="abs r " style="left:-85.3px;width:140px;top:215px;"><span id="t11" style="letter-spacing:0.00px"><span class="l">10</span></span></div>
<div class="abs r " style="left:-85.3px;width:140px;top:242px;"><span id="t12" style="letter-spacing:0.00px"><span class="l">8</span></span></div>
<div class="abs r " style="left:-85.3px;width:140px;top:268px;"><span id="t13" style="letter-spacing:0.00px"><span class="l">6</span></span></div>
<div class="abs r " style="left:-85.3px;width:140px;top:294px;"><span id="t14" style="letter-spacing:0.00px"><span class="l">4</span></span></div>
<div class="abs r " style="left:-85.3px;width:140px;top:320px;"><span id="t15" style="letter-spacing:0.00px"><span class="l">2</span></span></div>
<div class="abs " style="left:532.8px;top:76.0px;"><span id="t16" style="letter-spacing:0.00px"><span class="l">48</span></span></div>
<div class="abs " style="left:532.8px;top:96.0px;"><span id="t17" style="letter-spacing:0.00px"><span class="l">40</span></span></div>
<div class="abs " style="left:532.8px;top:116.0px;"><span id="t18" style="letter-spacing:0.00px"><span class="l">32</span></span></div>
<div class="abs " style="left:532.8px;top:136.0px;"><span id="t19" style="letter-spacing:0.00px"><span class="l">24</span></span></div>
<div class="abs " style="left:532.8px;top:156.0px;"><span id="t20" style="letter-spacing:0.00px"><span class="l">16</span></span></div>
<div class="abs " style="left:532.8px;top:176.0px;"><span id="t21" style="letter-spacing:0.00px"><span class="l">8</span></span></div>
<div class="abs " style="left:532.8px;top:215px;"><span id="t22" style="letter-spacing:0.00px"><span class="l">20</span></span></div>
<div class="abs " style="left:532.8px;top:242px;"><span id="t23" style="letter-spacing:0.00px"><span class="l">16</span></span></div>
<div class="abs " style="left:532.8px;top:268px;"><span id="t24" style="letter-spacing:0.00px"><span class="l">12</span></span></div>
<div class="abs " style="left:532.8px;top:294px;"><span id="t25" style="letter-spacing:0.00px"><span class="l">8</span></span></div>
<div class="abs " style="left:532.8px;top:320px;"><span id="t26" style="letter-spacing:0.00px"><span class="l">4</span></span></div>
<div class="abs " style="left:64.2px;top:206px;"><span id="t27" style="letter-spacing:0.00px"><span class="l">0</span></span></div>
<div class="abs " style="left:64.2px;top:355.5px;"><span id="t28" style="letter-spacing:0.00px"><span class="l">0</span></span></div>
<div class="abs " style="left:117.6px;top:206px;"><span id="t29" style="letter-spacing:0.00px"><span class="l">10</span></span></div>
<div class="abs " style="left:117.6px;top:355.5px;"><span id="t30" style="letter-spacing:0.00px"><span class="l">10</span></span></div>
<div class="abs " style="left:176.0px;top:206px;"><span id="t31" style="letter-spacing:0.00px"><span class="l">20</span></span></div>
<div class="abs " style="left:176.0px;top:355.5px;"><span id="t32" style="letter-spacing:0.00px"><span class="l">20</span></span></div>
<div class="abs " style="left:234.4px;top:206px;"><span id="t33" style="letter-spacing:0.00px"><span class="l">30</span></span></div>
<div class="abs " style="left:234.4px;top:355.5px;"><span id="t34" style="letter-spacing:0.00px"><span class="l">30</span></span></div>
<div class="abs " style="left:292.9px;top:206px;"><span id="t35" style="letter-spacing:0.00px"><span class="l">40</span></span></div>
<div class="abs " style="left:292.9px;top:355.5px;"><span id="t36" style="letter-spacing:0.00px"><span class="l">40</span></span></div>
<div class="abs " style="left:351.3px;top:206px;"><span id="t37" style="letter-spacing:0.00px"><span class="l">50</span></span></div>
<div class="abs " style="left:351.3px;top:355.5px;"><span id="t38" style="letter-spacing:0.00px"><span class="l">50</span></span></div>
<div class="abs " style="left:409.8px;top:206px;"><span id="t39" style="letter-spacing:0.00px"><span class="l">60</span></span></div>
<div class="abs " style="left:409.8px;top:355.5px;"><span id="t40" style="letter-spacing:0.00px"><span class="l">60</span></span></div>
<div class="abs " style="left:468.2px;top:206px;"><span id="t41" style="letter-spacing:0.00px"><span class="l">70</span></span></div>
<div class="abs " style="left:468.2px;top:355.5px;"><span id="t42" style="letter-spacing:0.00px"><span class="l">70</span></span></div>
<div class="abs " style="left:526.3px;top:206px;"><span id="t43" style="letter-spacing:0.00px"><span class="l">80</span></span></div>
<div class="abs " style="left:526.3px;top:355.5px;"><span id="t44" style="letter-spacing:0.00px"><span class="l">80</span></span></div>
<div class="abs " style="left:39.2px;top:367px;"><span id="t45" style="letter-spacing:0.01px"><span class="l">CD</span><span class="k" style="margin-right:-9.36px">エラー</span></span></div>
<div class="abs " style="left:219.8px;top:367px;"><span id="t46" style="letter-spacing:-0.02px"><span class="l">C2</span><span class="k" style="margin-right:-9.36px">エラー</span></span></div>
<div class="abs " style="left:400.7px;top:367px;"><span id="t47" style="letter-spacing:0.64px"><span class="l">Jitter</span></span></div>
<div class="abs " style="left:25.8px;top:381.7px;"><span id="t48" style="letter-spacing:0.08px">平均<span class="l">:</span></span></div>
<div class="abs nv" style="left:155.0px;top:381.7px;"><span id="t49" style="letter-spacing:-0.21px"><span class="l">2.37</span></span></div>
<div class="abs " style="left:25.8px;top:400.2px;"><span id="t50" style="letter-spacing:0.08px">最大<span class="l">:</span></span></div>
<div class="abs nv" style="left:162.2px;top:400.2px;"><span id="t51" style="letter-spacing:0.57px"><span class="l">24</span></span></div>
<div class="abs " style="left:25.8px;top:418.5px;"><span id="t52" style="letter-spacing:0.24px">合計<span class="l"> :</span></span></div>
<div class="abs nv" style="left:145.6px;top:418.5px;"><span id="t53" style="letter-spacing:0.04px"><span class="l">11387</span></span></div>
<div class="abs " style="left:205.8px;top:381.7px;"><span id="t54" style="letter-spacing:0.08px">平均<span class="l">:</span></span></div>
<div class="abs nv" style="left:337.0px;top:381.7px;"><span id="t55" style="letter-spacing:-0.21px"><span class="l">0.00</span></span></div>
<div class="abs " style="left:205.8px;top:400.2px;"><span id="t56" style="letter-spacing:0.08px">最大<span class="l">:</span></span></div>
<div class="abs r nv" style="left:217.7px;width:140px;top:400.2px;"><span id="t57" style="letter-spacing:0.00px"><span class="l">0</span></span></div>
<div class="abs " style="left:205.8px;top:418.5px;"><span id="t58" style="letter-spacing:0.24px">合計<span class="l"> :</span></span></div>
<div class="abs r nv" style="left:217.7px;width:140px;top:418.5px;"><span id="t59" style="letter-spacing:0.00px"><span class="l">0</span></span></div>
<div class="abs " style="left:388.7px;top:381.7px;"><span id="t60" style="letter-spacing:0.08px">平均<span class="l">:</span></span></div>
<div class="abs nv" style="left:507.4px;top:381.7px;"><span id="t61" style="letter-spacing:-0.39px"><span class="l">9.64 %</span></span></div>
<div class="abs " style="left:388.7px;top:400.2px;"><span id="t62" style="letter-spacing:0.08px">最大<span class="l">:</span></span></div>
<div class="abs nv" style="left:507.4px;top:400.2px;"><span id="t63" style="letter-spacing:-0.39px"><span class="l">12.1 %</span></span></div>
<div class="abs " style="left:583.4px;top:61px;"><span id="t64" style="letter-spacing:-0.35px">開始</span></div>
<div class="abs " style="left:667.8px;top:61px;"><span id="t65" style="letter-spacing:-0.20px">終了<span class="l" style="font-size:12px">(<u>X</u>)</span></span></div>
<div class="abs gbt" style="left:569.9px;top:80.5px;"><span id="t66" style="letter-spacing:-0.36px"><span class="k" style="margin-right:-12.48px">ディスク</span>情報</span></div>
<div class="abs gbt" style="left:569.4px;top:154.5px;"><span id="t67" style="letter-spacing:0.28px"><span class="l">Settings</span></span></div>
<div class="abs " style="left:568.4px;top:94px;"><span id="t68" style="letter-spacing:-0.43px"><span class="k" style="margin-right:-9.36px">タイプ</span><span class="l">:</span></span></div>
<div class="abs nv" style="left:616.9px;top:94px;"><span id="t69" style="letter-spacing:0.24px"><span class="l">Data CD</span></span></div>
<div class="abs " style="left:568.4px;top:109px;"><span id="t70" style="letter-spacing:-0.35px"><span class="l">ID:</span></span></div>
<div class="abs nv" style="left:616.9px;top:109px;"><span id="t71" style="letter-spacing:0.21px"><span class="l">Verbatim</span></span></div>
<div class="abs " style="left:568.4px;top:124px;"><span id="t72" style="letter-spacing:-0.02px">日付<span class="l">:</span></span></div>
<div class="abs nv" style="left:616.9px;top:124px;"><span id="t73" style="letter-spacing:0.25px"><span class="l">27 April 2005</span></span></div>
<div class="abs " style="left:568.4px;top:139px;"><span id="t74" style="letter-spacing:0.00px"><span class="l">Label:</span></span></div>
<div class="abs nv" style="left:616.9px;top:139px;"><span id="t75" style="letter-spacing:-0.41px"><span class="l">CDS_TEST_A2</span></span></div>
<div class="abs " style="left:567.7px;top:171.5px;"><span id="t76" style="letter-spacing:0.08px">転送速度</span></div>
<div class="abs " style="left:567.7px;top:197.5px;"><span id="t77" style="letter-spacing:-0.15px">開始</span></div>
<div class="abs " style="left:567.7px;top:219.5px;"><span id="t78" style="letter-spacing:0.08px">終了位置</span></div>
<div class="abs " style="left:634.4px;top:172px;"><span id="t79" style="letter-spacing:0.35px">最大</span></div>
<div class="abs " style="left:633.1px;top:196px;"><span id="t80" style="letter-spacing:-0.23px"><span class="l">00:00.00</span></span></div>
<div class="abs " style="left:633.1px;top:219px;"><span id="t81" style="letter-spacing:-0.25px"><span class="l">79:57.73</span></span></div>
<div class="abs " style="left:584.4px;top:241px;"><span id="t82" style="letter-spacing:0.17px"><span class="l">Quick Scan</span></span></div>
<div class="abs " style="left:584.4px;top:260px;"><span id="t83" style="letter-spacing:0.22px"><span class="l">Show C1/PIE</span></span></div>
<div class="abs " style="left:584.4px;top:275px;"><span id="t84" style="letter-spacing:0.27px"><span class="l">Show C2/PIF</span></span></div>
<div class="abs " style="left:584.4px;top:290px;"><span id="t85" style="letter-spacing:0.41px"><span class="l">Show Jitter</span></span></div>
<div class="abs " style="left:584.4px;top:305px;"><span id="t86" style="letter-spacing:0.01px"><span class="l">Show Read Speed</span></span></div>
<div class="abs " style="left:584.4px;top:320px;"><span id="t87" style="letter-spacing:0.06px"><span class="l">Show Write Speed</span></span></div>
<div class="abs " style="left:568.1px;top:349px;"><span id="t88" style="letter-spacing:-0.17px">品質<span class="k" style="margin-right:-9.36px">スコア</span><span class="l">:</span></span></div>
<div class="abs nv" style="left:694.4px;top:349px;"><span id="t89" style="letter-spacing:0.12px"><span class="l">96</span></span></div>
<div class="abs " style="left:568.1px;top:381px;"><span id="t90" style="letter-spacing:-0.15px">進行状況<span class="l">:</span></span></div>
<div class="abs nv" style="left:678.1px;top:381px;"><span id="t91" style="letter-spacing:-0.30px"><span class="l">100 %</span></span></div>
<div class="abs " style="left:568.1px;top:399px;"><span id="t92" style="letter-spacing:0.01px"><span class="k" style="margin-right:-15.60px">ポジション</span><span class="l">:</span></span></div>
<div class="abs nv" style="left:667.2px;top:399px;"><span id="t93" style="letter-spacing:-0.33px"><span class="l">79:55.00</span></span></div>
<div class="abs " style="left:568.1px;top:417.7px;"><span id="t94" style="letter-spacing:-0.09px">速度<span class="l">:</span></span></div>
<div class="abs nv" style="left:670.0px;top:417.7px;"><span id="t95" style="letter-spacing:0.07px"><span class="l">42.10 X</span></span></div>
<div class="fr" style="left:0;top:28px;width:743px;height:421px;border-color:#62627e"></div><div class="fr" style="left:1px;top:28px;width:741px;height:420px;border-color:#fff"></div><div class="fr" style="left:2px;top:28px;width:739px;height:419px;border-color:#62627e"></div>
</div>
</body></html>
